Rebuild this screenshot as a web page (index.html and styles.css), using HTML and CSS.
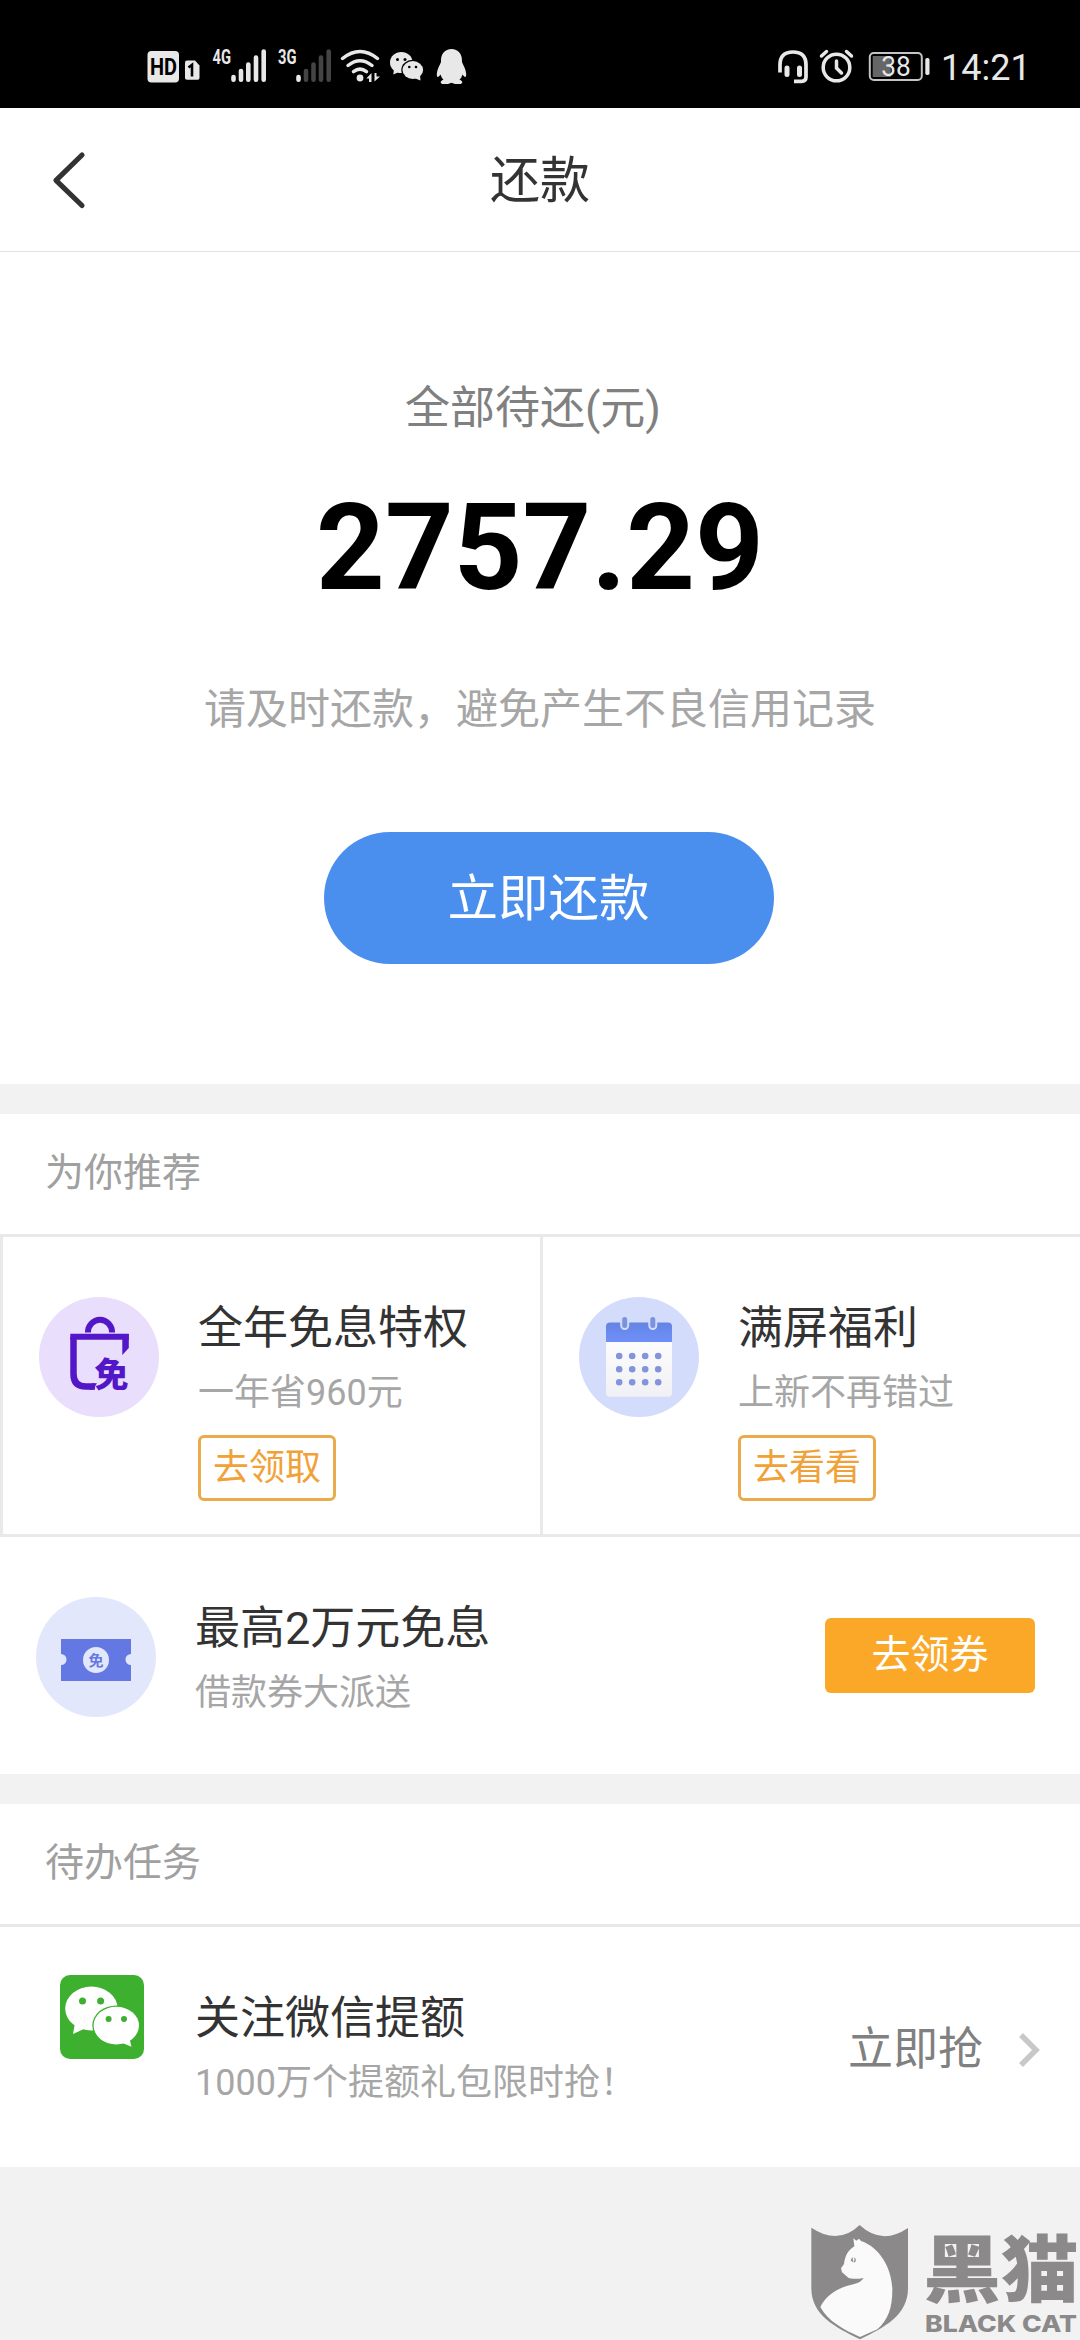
FILE: index.html
```html
<!DOCTYPE html>
<html lang="zh-CN">
<head>
<meta charset="utf-8">
<title>还款</title>
<link rel="stylesheet" href="styles.css">
</head>
<body>
<div class="status-bar">
  <div class="status-group">
    <svg width="60" height="108" viewBox="147 0 60 108">
      <rect x="147.5" y="51" width="31.5" height="31.5" rx="4" fill="#e8e8e8"/>
      <text x="150" y="74.500" class="st-hd" textLength="27" lengthAdjust="spacingAndGlyphs">HD</text>
      <path d="M187 60.500H195L199.500 65.500V78Q199.500 79.700 197.800 79.700H187Q185 79.700 185 78V62.500Q185 60.500 187 60.500Z" fill="#e8e8e8"/>
      <path d="M188.500 67.500L192 64.800V76.500" fill="none" stroke="#000" stroke-width="2.600"/>
    </svg>
    <svg width="65" height="108" viewBox="207 0 65 108">
      <text x="212.500" y="63.800" class="st-net" textLength="18.500" lengthAdjust="spacingAndGlyphs">4G</text>
      <path d="M233.500 77V79.800M241 71V79.800M248.300 64.500V79.800M256 57.500V79.800M263.700 51.500V79.800" class="bar"/>
    </svg>
    <svg width="65" height="108" viewBox="272 0 65 108">
      <text x="278" y="63.800" class="st-net" textLength="18.500" lengthAdjust="spacingAndGlyphs">3G</text>
      <path d="M306 71V79.800M313.500 64.500V79.800M321 57.500V79.800M328.700 51.500V79.800" class="bar bar-off"/>
      <path d="M298.500 77V79.800" class="bar"/>
    </svg>
    <svg width="50" height="108" viewBox="337 0 50 108">
      <path d="M342.500 58.500Q360 44.500 377.500 58.500M348 65.500Q360 56 372 65.500M353.500 71.700Q360 66.500 366.500 71.700" fill="none" stroke="#e8e8e8" stroke-width="3.500" stroke-linecap="round"/>
      <circle cx="360" cy="78" r="3.400" fill="#e8e8e8"/>
      <path d="M371.500 73V82H369V78.500H366.300ZM374.500 81.500V73H376.500V76.500H380Z" fill="#e8e8e8"/>
    </svg>
    <svg width="44" height="108" viewBox="387 0 44 108">
      <path d="M394 69L393.300 74.500L399 72" fill="#e8e8e8"/>
      <ellipse cx="401.300" cy="62.500" rx="11.300" ry="10.500" fill="#e8e8e8"/>
      <ellipse cx="412.800" cy="70" rx="11.500" ry="10.200"/>
      <path d="M420 75L420.500 80.500L414 78" fill="#e8e8e8"/>
      <ellipse cx="412.800" cy="70" rx="10.300" ry="9" fill="#e8e8e8"/>
      <g fill="#000"><circle cx="397.500" cy="59.500" r="1.500"/><circle cx="405" cy="59.500" r="1.500"/><circle cx="409.300" cy="67" r="1.300"/><circle cx="416" cy="67" r="1.300"/></g>
    </svg>
    <svg width="40" height="108" viewBox="431 0 40 108">
      <path d="M451.500 49C445 49 440.500 54 441 62C440 65 437 69 436.800 74C436.700 78 438.500 77.500 440.500 74.500Q441.500 78 443.500 79.500C439.500 81.500 440 84 443.500 84H448L451.500 82.800L455 84H459.500C463 84 463.500 81.500 459.500 79.500Q461.500 78 462.500 74.500C464.500 77.500 466.300 78 466.200 74C466 69 463 65 462 62C462.500 54 458 49 451.500 49Z" fill="#e8e8e8"/>
    </svg>
  </div>
  <div class="status-group">
    <svg width="41" height="108" viewBox="774 0 41 108">
      <path d="M780 72.500V65Q780 52 793 52Q806 52 806 65V77Q806 81.300 801.500 81.300H794" fill="none" stroke="#e8e8e8" stroke-width="3.700"/>
      <path d="M787 68V74.500M799.500 68V74.500" stroke="#e8e8e8" stroke-width="5" stroke-linecap="round"/>
    </svg>
    <svg width="45" height="108" viewBox="815 0 45 108">
      <g fill="none" stroke="#e8e8e8" stroke-width="3.500" stroke-linecap="round"><circle cx="836.500" cy="67.500" r="13.300"/><path d="M836.500 61V68L841.500 73M821.500 56L826.500 51.500M846.500 51.500L851.500 56"/></g>
    </svg>
    <svg width="76" height="108" viewBox="860 0 76 108">
      <rect x="869.800" y="53" width="52" height="27" rx="4" fill="none" stroke="#c4c4c4" stroke-width="2"/>
      <rect x="872.700" y="56" width="18" height="21" fill="#666"/>
      <rect x="925.300" y="58" width="4.200" height="17" rx="1.800" fill="#e8e8e8"/>
      <text x="881.300" y="76.300" class="st-batt" textLength="29.500" lengthAdjust="spacingAndGlyphs">38</text>
    </svg>
    <span class="clock">14:21</span>
  </div>
</div>

<header class="nav">
  <svg width="40" height="64" viewBox="0 0 40 64"><path d="M32 7L6 32.300L32 57.500" fill="none" stroke="#333" stroke-width="5.200" stroke-linecap="round" stroke-linejoin="round"/></svg>
  <h1 class="nav-title">还款</h1>
</header>

<section class="summary">
  <p class="summary-label">全部待还(元)</p>
  <p class="amount">2757.29</p>
  <p class="notice">请及时还款，避免产生不良信用记录</p>
  <button class="pay">立即还款</button>
</section>

<section class="panel">
  <h2 class="section-title">为你推荐</h2>
  <div class="offers">
    <article class="offer">
      <svg width="120" height="120" viewBox="0 0 120 120">
        <circle cx="60" cy="60" r="60" fill="#e9defc"/>
        <g fill="none" stroke="#5417c8"><path d="M48.900 35.500A12.100 12.800 0 0 1 73.100 35.500" stroke-width="6"/><path d="M34.500 39.700V77Q34.500 89.500 47 89.500H56" stroke-width="6.500"/><path d="M31.300 39.700H89.800" stroke-width="6"/></g>
        <path d="M83.300 37H89.800V51L83.300 58ZM53 86.200H58L54 92.700H50Z" fill="#5417c8"/>
        <text x="55.500" y="90" class="bag-char">免</text>
      </svg>
      <div class="copy">
        <h3>全年免息特权</h3>
        <p>一年省960元</p>
        <a class="tag">去领取</a>
      </div>
    </article>
    <article class="offer">
      <svg width="120" height="120" viewBox="0 0 120 120">
        <defs>
          <linearGradient id="calHead" x1="0" y1="0" x2="0" y2="1"><stop offset="0" stop-color="#6384e2"/><stop offset="1" stop-color="#7090fa"/></linearGradient>
          <linearGradient id="calBody" x1="0" y1="0" x2="0" y2="1"><stop offset="0" stop-color="#fff"/><stop offset="1" stop-color="#f1f1f5"/></linearGradient>
        </defs>
        <circle cx="60" cy="60" r="60" fill="#d4dcfc"/>
        <rect x="27" y="30" width="66" height="69.700" rx="4" fill="url(#calBody)"/>
        <path d="M27 45V29.500Q27 25.500 31 25.500H89Q93 25.500 93 29.500V45Z" fill="url(#calHead)"/>
        <g fill="#7b93de" stroke="#d4dcfc" stroke-width="2"><rect x="42.200" y="19" width="7" height="13" rx="3.500"/><rect x="70.300" y="19" width="7" height="13" rx="3.500"/></g>
        <path d="M40.200 59H79.500M40.200 72.300H79.500M40.200 85.300H79.500" stroke="#8494dc" stroke-width="6.600" stroke-linecap="round" stroke-dasharray="0 13"/>
      </svg>
      <div class="copy">
        <h3>满屏福利</h3>
        <p>上新不再错过</p>
        <a class="tag">去看看</a>
      </div>
    </article>
  </div>
  <article class="row coupon">
    <svg width="120" height="120" viewBox="0 0 120 120">
      <circle cx="60" cy="60" r="60" fill="#e2e7fb"/>
      <path d="M25 42H95V57A5.500 5.500 0 0 0 95 68V84H25V68A5.500 5.500 0 0 0 25 57Z" fill="#6478e4"/>
      <circle cx="60" cy="63" r="13" fill="#e2e7fb"/>
      <text x="60" y="68.600" class="coupon-char">免</text>
    </svg>
    <div class="copy">
      <h3>最高2万元免息</h3>
      <p>借款券大派送</p>
    </div>
    <button class="claim">去领券</button>
  </article>
</section>

<section class="panel">
  <h2 class="section-title ruled">待办任务</h2>
  <article class="row task">
    <svg width="84" height="84" viewBox="0 0 84 84">
      <rect width="84" height="84" rx="10" fill="#3eb030"/>
      <path d="M15 48L13 59L26 53" fill="#fff"/>
      <ellipse cx="31.400" cy="33.500" rx="26.200" ry="22" fill="#fff"/>
      <ellipse cx="56.300" cy="50.600" rx="24" ry="20.200" fill="#3eb030"/>
      <path d="M69 62L71.500 71.700L60 67" fill="#fff"/>
      <ellipse cx="56.300" cy="50.600" rx="22.700" ry="18.900" fill="#fff"/>
      <g fill="#3eb030"><circle cx="22.500" cy="26" r="3.500"/><circle cx="40.600" cy="26" r="3.500"/><circle cx="48.600" cy="44" r="3"/><circle cx="64" cy="44" r="3"/></g>
    </svg>
    <div class="copy">
      <h3>关注微信提额</h3>
      <p>1000万个提额礼包限时抢！</p>
    </div>
    <a class="grab"><span>立即抢</span>
      <svg width="24" height="38" viewBox="0 0 24 38"><path d="M3 4L18 19L3 34" fill="none" stroke="#c8c8c8" stroke-width="5.500"/></svg>
    </a>
  </article>
</section>

<footer class="footer">
  <svg width="270" height="140" viewBox="60 0 810 420">
    <path d="M64 83Q145 137 209 75Q275 137 354 84V265C354 345 285 382 210 418C135 382 64 345 64 265Z" fill="#8b898a"/>
    <path d="M190 115L199 122L207 116L213 123C270 142 306 205 307 270C307 325 294 360 262 388L210 411C160 388 115 365 91 321C110 280 155 260 190 253Q212 248 221 234C200 238 183 237 175 233L156 217L153 205L162 192C165 165 176 150 193 139Z" fill="#fafafa"/>
    <path d="M182 182Q184 173 190 172Q185 178 190 186ZM193 172Q200 178 196 185Q193 188 190 187Q196 181 193 172Z" fill="#8b898a"/>
    <text x="400" y="288" class="mark-cn" textLength="466" lengthAdjust="spacingAndGlyphs">黑猫</text>
    <text x="405" y="397" class="mark-en" textLength="456" lengthAdjust="spacingAndGlyphs">BLACK CAT</text>
  </svg>
</footer>
</body>
</html>
```
FILE: styles.css
```css
* {
  box-sizing: border-box;
  margin: 0;
  padding: 0;
}

body {
  width: 1080px;
  height: 2340px;
  display: flex;
  flex-direction: column;
  overflow: hidden;
  background: #f2f2f2;
  color: #333;
  font-family: Roboto, "Noto Sans CJK SC", sans-serif;
  font-weight: 400;
}

svg {
  display: block;
  flex: none;
}

h1, h2, h3 {
  font-weight: 400;
}

button {
  border: 0;
  color: #fff;
  font-family: inherit;
}

/* Status bar */
.status-bar {
  height: 108px;
  padding: 0 50px 0 147px;
  display: flex;
  justify-content: space-between;
  background: #000;
}

.status-group {
  display: flex;
  align-items: center;
}

.st-hd {
  font: 700 23px Roboto, sans-serif;
  fill: #000;
}

.st-net {
  font: 700 20px Roboto, sans-serif;
  fill: #e8e8e8;
}

.st-batt {
  font: 400 27px Roboto, sans-serif;
  fill: #e8e8e8;
}

.bar {
  stroke: #e8e8e8;
  stroke-width: 4.6;
  stroke-linecap: round;
}

.bar-off {
  stroke: #444;
}

.clock {
  width: 94px;
  height: 108px;
  padding: 47px 0 0 5px;
  color: #e8e8e8;
  font-size: 36px;
  line-height: 42px;
}

/* Title bar */
.nav {
  height: 144px;
  padding: 0 50px;
  display: grid;
  grid-template-columns: 40px 1fr 40px;
  align-items: center;
  background: #fff;
  border-bottom: 1px solid #e2e2e2;
}

.nav-title {
  padding-top: 3px;
  text-align: center;
  font-size: 50px;
  line-height: 72px;
}

/* Balance */
.summary {
  height: 832px;
  padding-top: 122px;
  display: flex;
  flex-direction: column;
  align-items: center;
  background: #fff;
}

.summary-label {
  margin-right: 14px;
  color: #808080;
  font-size: 45px;
  line-height: 70px;
}

.amount {
  margin-top: 34px;
  color: #000;
  font-size: 120px;
  font-weight: 700;
  line-height: 140px;
}

.notice {
  margin-top: 58px;
  color: #a6a6a6;
  font-size: 42px;
  line-height: 68px;
}

.pay {
  width: 450px;
  height: 132px;
  margin: 88px 0 0 17px;
  padding-bottom: 9px;
  border-radius: 66px;
  background: #4a8fee;
  font-size: 50.5px;
}

/* White sections */
.panel {
  margin-bottom: 30px;
  background: #fff;
}

.summary + .panel {
  margin-top: 30px;
}

.section-title {
  height: 120px;
  padding-left: 45px;
  color: #a0a0a0;
  font-size: 39px;
  line-height: 119px;
}

.ruled {
  height: 123px;
  border-bottom: 3px solid #e8eaea;
}

.offers {
  height: 303px;
  display: grid;
  grid-template-columns: 540px 540px;
  border: solid #e8eaea;
  border-width: 3px 0;
}

.offer {
  padding: 60px 0 0 36px;
  display: flex;
  align-items: flex-start;
  gap: 39px;
  border-left: 3px solid #e8eaea;
}

.copy h3 {
  padding-top: 2px;
  font-size: 45px;
  line-height: 60px;
}

.copy p {
  margin-top: 7px;
  color: #a6a6a6;
  font-size: 36px;
  line-height: 54px;
}

.tag {
  width: 138px;
  height: 66px;
  margin-top: 15px;
  display: block;
  border: 3px solid #e9ab4b;
  border-radius: 6px;
  color: #f0a238;
  font-size: 36px;
  line-height: 60px;
  text-align: center;
}

.row {
  display: flex;
  align-items: flex-start;
}

.coupon {
  height: 237px;
  padding: 60px 45px 0 36px;
}

.coupon .copy {
  margin-left: 39px;
}

.claim {
  width: 210px;
  height: 75px;
  margin: 21px 0 0 auto;
  padding-bottom: 9px;
  border-radius: 6px;
  background: #fba829;
  font-size: 39px;
}

.task {
  height: 240px;
  padding: 48px 38px 0 60px;
}

.task .copy {
  margin: 12px 0 0 51px;
}

.grab {
  margin: 43px 0 0 auto;
  display: flex;
  align-items: center;
  gap: 35px;
  color: #808080;
  font-size: 45px;
  line-height: 64px;
}

.bag-char {
  font: 900 34px "Noto Sans CJK SC", sans-serif;
  fill: #5417c8;
}

.coupon-char {
  font: 700 15px "Noto Sans CJK SC", sans-serif;
  fill: #6478e4;
  text-anchor: middle;
}

/* Source mark */
.footer {
  flex: 1;
  margin-top: -30px;
  display: flex;
  justify-content: flex-end;
  align-items: flex-end;
}

.mark-cn {
  font: 900 218px "Noto Sans CJK SC", sans-serif;
  fill: #8b898a;
}

.mark-en {
  font: 800 68px Inter, "Liberation Sans", sans-serif;
  fill: #8b898a;
}
```
